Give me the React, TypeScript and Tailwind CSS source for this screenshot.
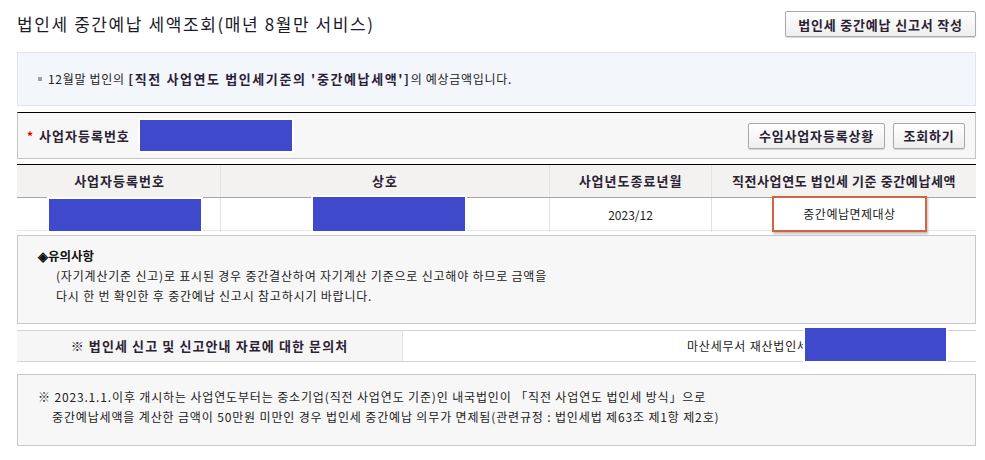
import React from 'react'

const font = { fontFamily: '"Noto Sans CJK KR", "Noto Sans", sans-serif' }

function Btn({ children, className = '' }: { children: React.ReactNode; className?: string }) {
  return (
    <button
      className={`h-[26px] border border-[#a9a9a9] rounded-[2px] bg-gradient-to-b from-white to-[#eeeeee] shadow-[0_1px_1px_rgba(0,0,0,0.15)] text-[13px] font-bold text-[#2a2233] leading-none tracking-[0.8px] ${className}`}
    >
      {children}
    </button>
  )
}

function Redact({ className = '' }: { className?: string }) {
  return <div className={`bg-[#3f49cc] outline-2 outline-white ${className}`} />
}

export default function App() {
  return (
    <div style={font} className="w-[985px] h-[460px] bg-white pl-[17px] pr-[9px] text-[#222] overflow-hidden">
      {/* 제목 */}
      <div className="flex items-center justify-between pt-[11px] h-[37px]">
        <h1 className="text-[17px] leading-none text-[#1c1a2a] tracking-[1.6px] -mt-[2px]">
          법인세 중간예납 세액조회(매년 8월만 서비스)
        </h1>
        <Btn className="w-[191px]">법인세 중간예납 신고서 작성</Btn>
      </div>

      {/* 안내 */}
      <div className="mt-[15px] h-[54px] bg-[#f3f6fb] border border-[#dfe5ee] flex items-center pl-[20px] text-[12px] tracking-[0.7px]">
        <span className="w-[4px] h-[4px] bg-[#a0a0a0] mr-[6px]" />
        <span>
          12월말 법인의{' '}
          <b className="text-[13px] tracking-[1.6px] text-[#2a1f3a]">[직전 사업연도 법인세기준의 '중간예납세액']</b>
          의 예상금액입니다.
        </span>
      </div>

      {/* 조회 */}
      <div className="mt-[6px] h-[47px] bg-[#f7f7f7] border border-[#c4c4c4] border-t-black flex items-center">
        <span className="ml-[9px] text-[#d00] text-[12px] font-bold">*</span>
        <span className="ml-[6px] text-[13px] font-bold text-[#2a2233] tracking-[1px]">사업자등록번호</span>
        <Redact className="ml-[10px] w-[152px] h-[31px]" />
        <div className="ml-auto mr-[10px] flex gap-[8px]">
          <Btn className="w-[137px]">수임사업자등록상황</Btn>
          <Btn className="w-[72px]">조회하기</Btn>
        </div>
      </div>

      {/* 결과 표 */}
      <div className="mt-[5px] border-t border-black">
        <div className="grid grid-cols-[203px_329px_162px_265px] h-[33px] bg-[#f3f2f1] border-b border-[#a5a5a5] text-[13px] font-bold text-[#2a2233] tracking-[1px]">
          <div className="flex items-center justify-center pl-[2px]">사업자등록번호</div>
          <div className="flex items-center justify-center border-l border-[#e2e2e2]">상호</div>
          <div className="flex items-center justify-center border-l border-[#e2e2e2]">사업년도종료년월</div>
          <div className="flex items-center justify-center border-l border-[#e2e2e2] tracking-[0.6px]">직전사업연도 법인세 기준 중간예납세액</div>
        </div>
        <div className="grid grid-cols-[203px_329px_162px_265px] h-[33px] border-b border-[#e4e4e4] text-[12px]">
          <div className="flex items-center pl-[32px]">
            <Redact className="w-[152px] h-[32px]" />
          </div>
          <div className="flex items-center pl-[92px] border-l border-[#e2e2e2]">
            <Redact className="w-[152px] h-[34px] -mt-[2px]" />
          </div>
          <div className="flex items-center justify-center border-l border-[#e2e2e2]">2023/12</div>
          <div className="flex items-center pl-[60px] border-l border-[#e2e2e2]">
            <div className="relative z-10 w-[155px] h-[36px] -mt-[2px] border-2 border-[#d0653f] bg-white shadow-[1px_2px_2px_rgba(0,0,0,0.25)] flex items-center justify-center tracking-[0.5px]">
              중간예납면제대상
            </div>
          </div>
        </div>
      </div>

      {/* 유의사항 */}
      <div className="mt-[4px] h-[89px] bg-[#f7f7f7] border border-[#c8c8c8] pl-[20px] pt-[10px] text-[12px] leading-[20px] tracking-[0.8px]">
        <div className="font-bold text-[12.5px] text-[#111] tracking-normal">◈유의사항</div>
        <div className="pl-[18px]">
          (자기계산기준 신고)로 표시된 경우 중간결산하여 자기계산 기준으로 신고해야 하므로 금액을
          <br />
          다시 한 번 확인한 후 중간예납 신고시 참고하시기 바랍니다.
        </div>
      </div>

      {/* 문의처 */}
      <div className="mt-[6px] h-[32px] border-y border-[#d4d4d4] flex">
        <div className="w-[385px] bg-[#f6f6f6] flex items-center justify-center text-[13px] font-bold text-[#2a2233] tracking-[1.1px]">
          ※ 법인세 신고 및 신고안내 자료에 대한 문의처
        </div>
        <div className="relative flex-1 border-l border-[#e2e2e2] flex items-center pl-[284px] text-[12px] tracking-[0.8px]">
          마산세무서 재산법인세과
          <Redact className="absolute left-[402px] -top-[3px] w-[141px] h-[33px]" />
        </div>
      </div>

      {/* 하단 안내 */}
      <div className="mt-[12px] h-[72px] bg-[#f7f7f7] border border-[#c8c8c8] pl-[20px] pt-[12px] text-[12px] leading-[20px] tracking-[0.85px]">
        <div>※ 2023.1.1.이후 개시하는 사업연도부터는 중소기업(직전 사업연도 기준)인 내국법인이 「직전 사업연도 법인세 방식」으로</div>
        <div className="pl-[14px]">
          중간예납세액을 계산한 금액이 50만원 미만인 경우 법인세 중간예납 의무가 면제됨(관련규정 : 법인세법 제63조 제1항 제2호)
        </div>
      </div>
    </div>
  )
}
